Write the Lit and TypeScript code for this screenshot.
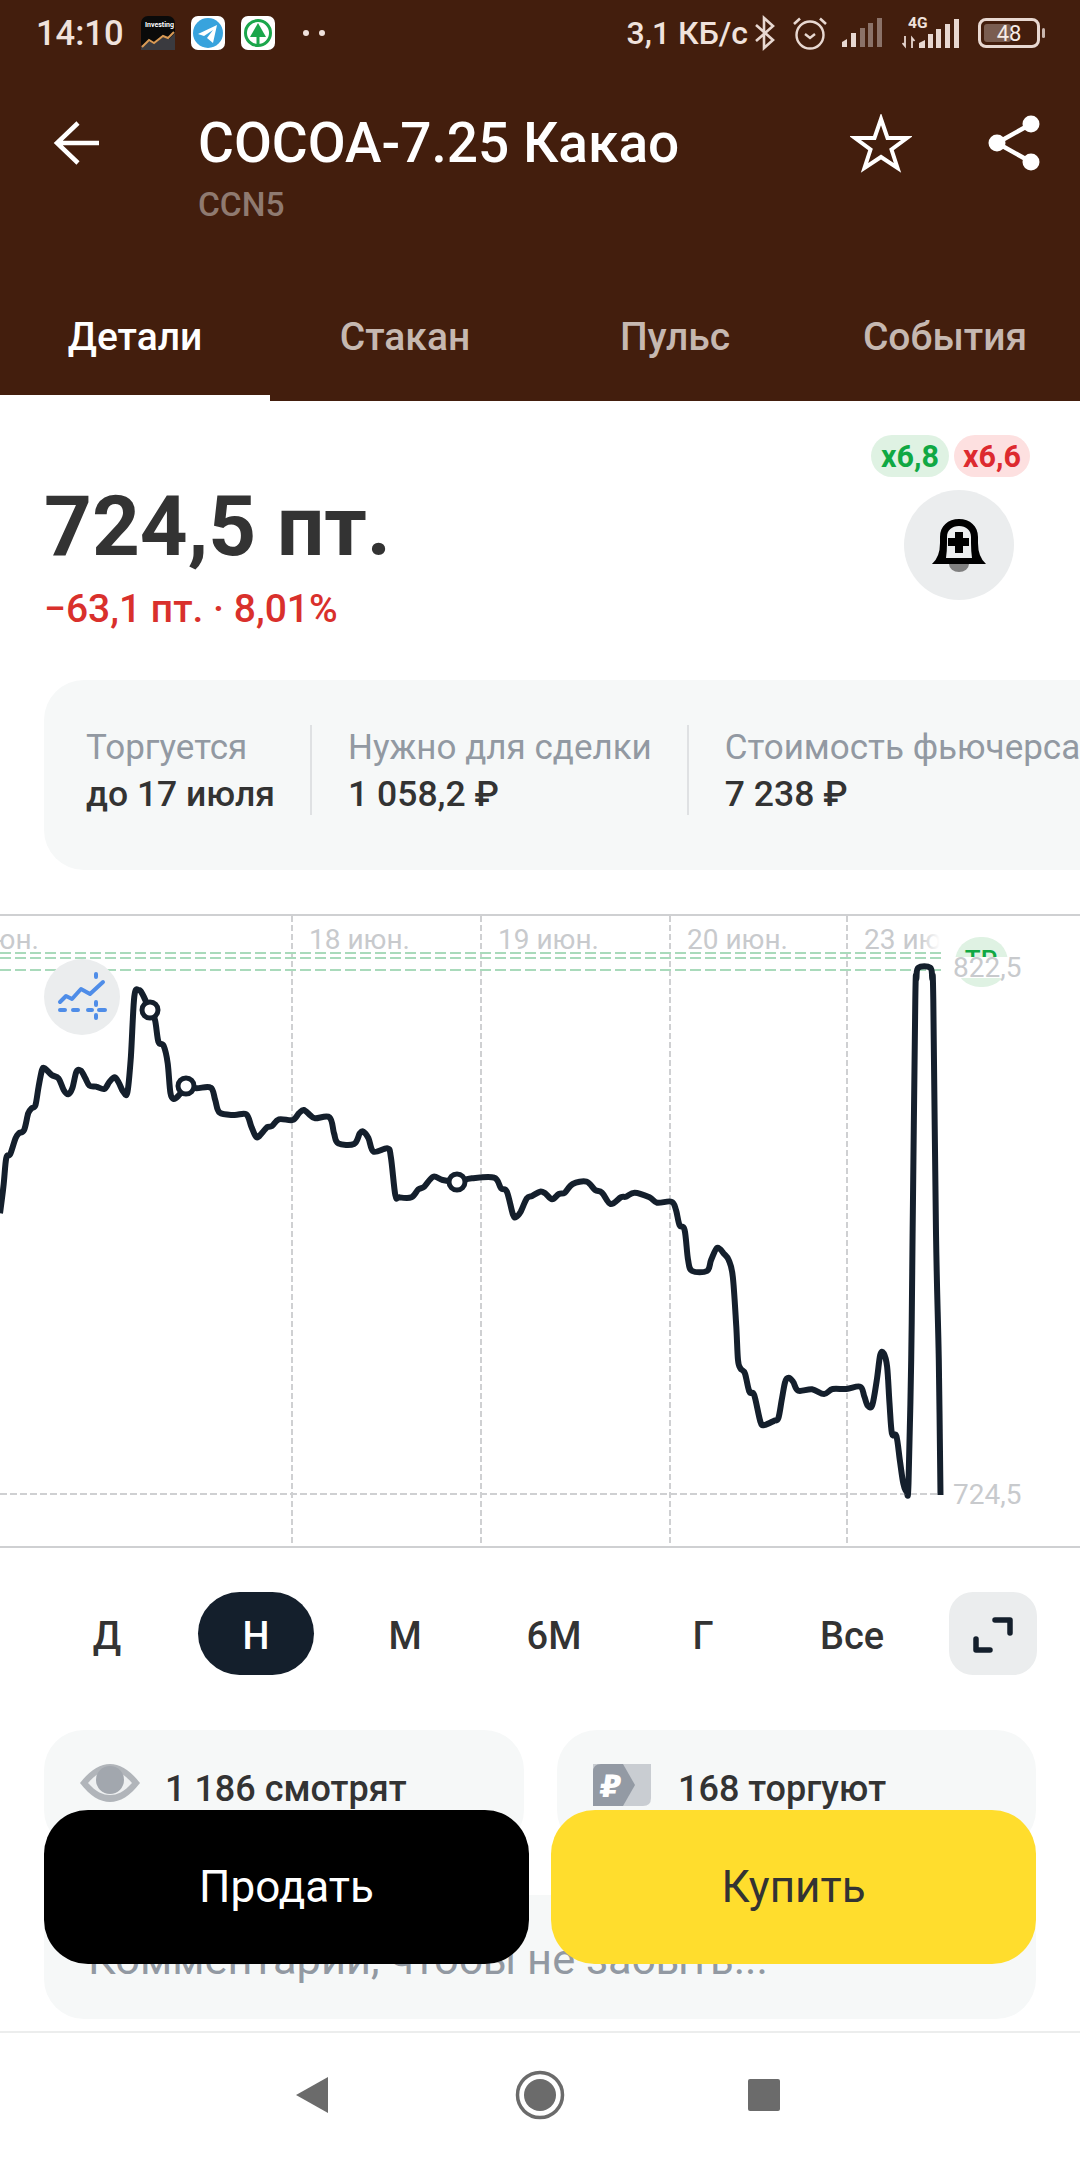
import { LitElement, html, css, svg } from 'lit';
import { customElement } from 'lit/decorators.js';

type Pt = [number, number];

// traced from zoomed crops, so each run has its own crop origin
const crop = (x0: number, y0: number, pts: Pt[]): Pt[] =>
  pts.map(([x, y]) => [x0 + x / 2.904, y0 + y / 3] as Pt);

const LINE: Pt[] = [
  ...crop(0, 900, [
    [0, 940], [10, 860], [18, 775], [30, 762], [45, 715], [55, 700], [70, 690], [82, 640], [92, 625], [103, 615],
    [112, 560], [122, 510], [130, 505], [150, 525], [170, 535], [185, 570], [198, 583], [210, 565], [222, 515],
    [235, 512], [248, 535], [260, 557], [280, 560], [303, 567], [318, 545], [333, 532], [345, 548], [358, 575],
    [370, 577], [380, 470], [390, 290], [403, 270], [415, 285], [435, 330], [450, 360], [460, 425], [475, 437],
    [487, 490], [495, 580], [505, 597], [520, 585], [540, 560], [570, 565], [612, 563], [625, 600], [638, 638],
    [680, 645], [715, 643], [730, 680], [745, 712], [760, 700], [775, 682], [790, 678], [810, 658], [850, 660],
    [868, 640], [882, 630], [900, 645], [915, 655], [957, 652], [970, 700], [982, 730], [1028, 732], [1045, 700],
    [1055, 695], [1070, 715], [1085, 755], [1125, 745], [1135, 770], [1148, 885], [1160, 892], [1195, 892],
    [1215, 868], [1232, 860], [1258, 830], [1285, 840], [1325, 845], [1370, 835], [1435, 833], [1455, 865],
    [1472, 875], [1490, 945], [1500, 950], [1512, 935], [1530, 895], [1545, 888],
  ]),
  ...crop(540, 900, [
    [0, 875], [15, 880], [35, 898], [55, 882], [72, 878], [95, 852], [135, 845], [160, 870], [180, 878], [205, 912],
    [235, 892], [250, 890], [275, 878], [318, 892], [340, 908], [382, 905], [395, 930], [405, 975], [420, 990],
    [430, 1080],
  ]),
  ...crop(540, 1260, [
    [442, 33], [485, 33], [497, 0], [515, -37], [535, -18], [548, 0], [560, 50], [570, 200], [575, 300], [582, 325],
    [595, 340], [608, 395], [622, 405], [640, 485], [652, 495], [680, 482], [692, 475], [702, 420], [712, 365],
    [722, 353], [735, 365], [750, 392], [790, 388], [825, 402], [850, 387], [890, 387], [930, 380], [942, 410],
    [952, 437], [965, 435], [978, 360], [988, 285], [998, 280], [1008, 320], [1015, 430], [1022, 520], [1035, 528],
    [1045, 600], [1055, 670], [1065, 695], [1070, 670], [1078, 300],
  ]),
  // the spike has a flat top, the extra points keep the curve from bulging over it
  ...crop(540, 900, [
    [1082, 1000], [1090, 300], [1093, 235], [1099, 203], [1133, 203], [1139, 235], [1142, 300], [1150, 1000],
  ]),
  ...crop(540, 1260, [[1158, 300], [1163, 705]]),
];

const smooth = (pts: Pt[]) => {
  let d = `M${pts[0][0]} ${pts[0][1]}`;
  for (let i = 0; i < pts.length - 1; i++) {
    const p0 = pts[Math.max(i - 1, 0)];
    const p1 = pts[i];
    const p2 = pts[i + 1];
    const p3 = pts[Math.min(i + 2, pts.length - 1)];
    const c1x = p1[0] + (p2[0] - p0[0]) / 6;
    const c1y = p1[1] + (p2[1] - p0[1]) / 6;
    const c2x = p2[0] - (p3[0] - p1[0]) / 6;
    const c2y = p2[1] - (p3[1] - p1[1]) / 6;
    d += `C${c1x.toFixed(1)} ${c1y.toFixed(1)} ${c2x.toFixed(1)} ${c2y.toFixed(1)} ${p2[0].toFixed(1)} ${p2[1].toFixed(1)}`;
  }
  return d;
};

const GRID_X = [292, 481, 670, 847];
const GREEN_Y = [953, 958, 970];
const MARKERS: Pt[] = [[150, 1010], [186, 1086], [457, 1182]];
const PERIODS = ['Д', 'Н', 'М', '6М', 'Г', 'Все'];
const TABS = ['Детали', 'Стакан', 'Пульс', 'События'];

@customElement('app-root')
export class AppRoot extends LitElement {
  static styles = css`
    :host {
      display: block;
      position: relative;
      width: 1080px;
      height: 2160px;
      overflow: hidden;
      background: #fff;
      font-family: Roboto, 'Noto Sans', sans-serif;
      color: #333;
    }
    svg {
      display: block;
    }
    .top {
      background: #431e0d;
      height: 401px;
      display: flex;
      flex-direction: column;
    }
    .status {
      height: 66px;
      display: flex;
      align-items: center;
      padding: 0 35px 0 36px;
      color: #f0e2dc;
      font-size: 32px;
      font-weight: 500;
    }
    .status .time {
      width: 105px;
      font-size: 34.5px;
    }
    .status .apps {
      display: flex;
      gap: 16px;
      align-items: center;
    }
    .status .dots {
      display: flex;
      gap: 10px;
      margin-left: 28px;
    }
    .status .dots i {
      width: 6px;
      height: 6px;
      border-radius: 50%;
      background: #f0e2dc;
    }
    .status .right {
      margin-left: auto;
      display: flex;
      align-items: center;
    }
    .battery {
      position: relative;
      width: 62px;
      height: 30px;
      box-sizing: border-box;
      border: 3px solid #e8d8d1;
      border-radius: 8px;
      display: flex;
      align-items: center;
      justify-content: center;
      font-size: 22px;
      font-weight: 400;
      color: #f5ebe6;
      margin-left: 16px;
    }
    .battery::before {
      content: '';
      position: absolute;
      left: 3px;
      top: 3px;
      bottom: 3px;
      width: 27px;
      border-radius: 3px;
      background: #7a5d50;
    }
    .battery span {
      position: relative;
    }
    .nub {
      width: 3px;
      height: 10px;
      border-radius: 2px;
      background: #c9b6ad;
      margin-left: 2px;
    }
    .toolbar {
      position: relative;
      height: 164px;
      padding-left: 198px;
      box-sizing: border-box;
    }
    .toolbar .back,
    .toolbar .star,
    .toolbar .share {
      position: absolute;
    }
    .toolbar .back {
      left: 50px;
      top: 50px;
    }
    .toolbar .star {
      left: 850px;
      top: 48px;
    }
    .toolbar .share {
      left: 985px;
      top: 46px;
    }
    .title {
      padding-top: 48px;
      font-size: 55px;
      line-height: 58px;
      font-weight: 500;
      color: #fff;
      white-space: nowrap;
    }
    .ticker {
      margin-top: 15px;
      font-size: 33.5px;
      line-height: 36px;
      font-weight: 500;
      color: #8f7a70;
    }
    .tabs {
      flex: 1;
      display: grid;
      grid-template-columns: repeat(4, 270px);
    }
    .tab {
      display: flex;
      align-items: center;
      justify-content: center;
      padding-top: 48px;
      padding-bottom: 6px;
      font-size: 39px;
      font-weight: 500;
      color: #c6b8b1;
      box-sizing: border-box;
    }
    .tab.active {
      color: #fff;
      border-bottom: 6px solid #fff;
      padding-bottom: 0;
    }
    .quote {
      height: 279px;
      box-sizing: border-box;
      padding: 34px 50px 0 44px;
      display: flex;
      justify-content: space-between;
    }
    .price {
      padding-top: 42px;
      font-size: 83.5px;
      line-height: 100px;
      font-weight: 700;
    }
    .change {
      margin-top: 11px;
      font-size: 39px;
      line-height: 42px;
      font-weight: 500;
      color: #d9302c;
    }
    .side {
      display: flex;
      flex-direction: column;
      align-items: flex-end;
    }
    .badges {
      display: flex;
      gap: 5px;
    }
    .badge {
      height: 42px;
      padding: 0 9px;
      display: flex;
      align-items: center;
      border-radius: 21px;
      font-size: 30.5px;
      font-weight: 700;
    }
    .badge.up {
      padding: 0 10px;
      background: #dff2e3;
      color: #10a843;
    }
    .badge.down {
      background: #fde0e0;
      color: #dd2a2f;
    }
    .bell {
      width: 110px;
      height: 110px;
      margin: 13px 16px 0 0;
      border-radius: 50%;
      background: #ebedee;
      display: flex;
      align-items: center;
      justify-content: center;
    }
    .info {
      margin-left: 44px;
      width: max-content;
      height: 190px;
      box-sizing: border-box;
      padding: 0 60px 10px 42px;
      border-radius: 40px 0 0 40px;
      background: #f6f8f8;
      display: flex;
      align-items: center;
      font-size: 35px;
    }
    .info .cell {
      padding-right: 35px;
      white-space: nowrap;
    }
    .info .cell + .cell {
      border-left: 2px solid #dfe1e3;
      padding-left: 36px;
    }
    .label {
      line-height: 45px;
      color: #9299a2;
    }
    .value {
      margin-top: 3px;
      line-height: 42px;
      font-size: 35.5px;
      font-weight: 500;
    }
    .chart {
      margin-top: 44px;
    }
    .chart text {
      font-family: Roboto, 'Noto Sans', sans-serif;
      fill: #c8cacd;
    }
    .periods {
      margin-top: 44px;
      height: 83px;
      padding-left: 49px;
      display: flex;
      gap: 33px;
      font-size: 38px;
      font-weight: 500;
    }
    .period {
      width: 116px;
      box-sizing: border-box;
      padding-top: 4px;
      display: flex;
      align-items: center;
      justify-content: center;
      border-radius: 42px;
    }
    .period.active {
      background: #141f2c;
      color: #fff;
    }
    .expand {
      width: 88px;
      margin-left: 6px;
      border-radius: 24px;
      background: #ebedee;
    }
    .stats {
      margin: 55px 44px 0;
      display: grid;
      grid-template-columns: 480px 479px;
      gap: 33px;
    }
    .stat {
      height: 120px;
      box-sizing: border-box;
      padding: 37px 0 0 36px;
      border-radius: 40px;
      background: #f6f8f8;
      display: flex;
      align-items: flex-start;
      gap: 25px;
      font-size: 36px;
      line-height: 44px;
      font-weight: 500;
    }
    .stat svg {
      margin-top: -3px;
    }
    .stat + .stat {
      gap: 27px;
    }
    .comment {
      margin: 45px 44px 0;
      height: 124px;
      box-sizing: border-box;
      padding: 40px 0 0 44px;
      border-radius: 40px;
      background: #f6f8f8;
      font-size: 43.4px;
      line-height: 50px;
      color: #9299a2;
    }
    .actions {
      position: absolute;
      left: 44px;
      top: 1810px;
      display: grid;
      grid-template-columns: 485px 485px;
      gap: 22px;
    }
    .btn {
      height: 154px;
      border-radius: 44px;
      display: flex;
      align-items: center;
      justify-content: center;
      font-size: 44px;
    }
    .btn.sell {
      background: #000;
      color: #fff;
    }
    .btn.buy {
      background: #ffdd2d;
      color: #333;
    }
    .nav {
      margin-top: 12px;
      border-top: 2px solid #eceded;
    }
  `;

  private _chart() {
    return html`<svg class="chart" width="1080" height="634" viewBox="0 914 1080 634">
      <defs>
        <linearGradient id="fade">
          <stop offset="0" stop-color="#fff" stop-opacity="0" />
          <stop offset="1" stop-color="#fff" />
        </linearGradient>
      </defs>
      <line x1="0" y1="915" x2="1080" y2="915" stroke="#cfd0d2" stroke-width="2" />
      <line x1="0" y1="1547" x2="1080" y2="1547" stroke="#cfd0d2" stroke-width="2" />
      ${GRID_X.map(
        (x) => svg`<line x1=${x} y1="916" x2=${x} y2="1546" stroke="#cfd0d2" stroke-width="2" stroke-dasharray="6 3" />`
      )}
      <line x1="0" y1="1494" x2="942" y2="1494" stroke="#cfd0d2" stroke-width="2" stroke-dasharray="7 3" />
      <text x="39" y="949" font-size="28" text-anchor="end">17 июн.</text>
      <text x="309" y="949" font-size="28">18 июн.</text>
      <text x="498" y="949" font-size="28">19 июн.</text>
      <text x="687" y="949" font-size="28">20 июн.</text>
      <text x="864" y="949" font-size="28">23 июн.</text>
      <rect x="920" y="925" width="20" height="27" fill="url(#fade)" />
      <rect x="940" y="925" width="60" height="27" fill="#fff" />
      ${GREEN_Y.map(
        (y) => svg`<line x1="0" y1=${y} x2="942" y2=${y} stroke="#a9dabb" stroke-width="2" stroke-dasharray="11 4" />`
      )}

      <rect x="955" y="937" width="53" height="50" rx="25" fill="#dff2e3" />
      <text x="981" y="969" font-size="26" font-weight="500" text-anchor="middle" style="fill:#10a843">TP</text>
      <rect x="950" y="957" width="64" height="21" fill="#fff" />
      <text x="953" y="977" font-size="28">822,5</text>
      <text x="953" y="1504" font-size="28">724,5</text>

      <circle cx="82" cy="997" r="38" fill="#ebedee" />
      <path
        d="M60 1002L66 996L72 999L81 989L90 994L103 982"
        fill="none"
        stroke="#4f8de8"
        stroke-width="4"
        stroke-linejoin="round"
        stroke-linecap="round"
      />
      <path
        d="M60 1010H65M73 1010H78M88 1010H92M99 1010H105M96 974V977M96 1002V1005M96 1015V1018"
        fill="none"
        stroke="#4f8de8"
        stroke-width="4"
        stroke-linecap="round"
      />

      <path d=${smooth(LINE)} fill="none" stroke="#141f2c" stroke-width="6" stroke-linejoin="round" stroke-linecap="butt" />
      ${MARKERS.map(
        ([x, y]) => svg`<circle cx=${x} cy=${y} r="8" fill="#fff" stroke="#141f2c" stroke-width="5" />`
      )}
    </svg>`;
  }

  private _statusIcons() {
    return html`
      <svg width="24" height="36" viewBox="0 0 24 36" style="margin-left:5px">
        <path d="M3 10L20 25L11 33V3L20 11L3 26" fill="none" stroke="#e8d8d1" stroke-width="2.6" />
      </svg>
      <svg width="36" height="36" viewBox="0 0 36 36" style="margin-left:15px">
        <circle cx="18" cy="20" r="13.5" fill="none" stroke="#e8d8d1" stroke-width="2.4" />
        <path d="M13 19L18 23L23 19" fill="none" stroke="#e8d8d1" stroke-width="2.4" />
        <path d="M2 9L8 3.5M34 9L28 3.5" fill="none" stroke="#e8d8d1" stroke-width="2.6" />
      </svg>
      <svg width="42" height="30" viewBox="0 0 42 30" style="margin-left:13px">
        <path d="M1 29V24L6 21V29Z" fill="#e8d8d1" />
        <rect x="10" y="15" width="5" height="14" fill="#e8d8d1" />
        <rect x="19" y="10" width="5" height="19" fill="#8b7268" />
        <rect x="27" y="5" width="5" height="24" fill="#8b7268" />
        <rect x="36" y="0" width="5" height="29" fill="#8b7268" />
      </svg>
      <svg width="60" height="34" viewBox="0 0 60 34" style="margin-left:19px">
        <text x="6" y="12" font-size="15.5" font-weight="700" fill="#f0e2dc" font-family="Roboto, sans-serif">4G</text>
        <path d="M3 20V30L0.5 27M10 32V22L12.5 25" fill="none" stroke="#e8d8d1" stroke-width="1.8" />
        <path d="M17 32V27L23 24V32Z" fill="#e8d8d1" />
        <rect x="26" y="18" width="5" height="14" fill="#e8d8d1" />
        <rect x="34" y="13" width="5" height="19" fill="#e8d8d1" />
        <rect x="43" y="8" width="5" height="24" fill="#e8d8d1" />
        <rect x="52" y="3" width="5" height="29" fill="#e8d8d1" />
      </svg>
      <div class="battery"><span>48</span></div>
      <div class="nub"></div>
    `;
  }

  render() {
    return html`
      <div class="top">
        <div class="status">
          <span class="time">14:10</span>
          <div class="apps">
            <svg width="34" height="34" viewBox="0 0 34 34">
              <rect width="34" height="34" rx="7" fill="#0a0a0a" />
              <path d="M0 34V30L8 25L13 28L22 21L28 23L34 17V34Z" fill="#3a3a3f" />
              <text x="4" y="11" font-size="7" font-weight="700" fill="#fff" font-family="Roboto, sans-serif">Investing</text>
              <path d="M1 31L8 24L13 27L22 20L27 22L33 16" fill="none" stroke="#d99a55" stroke-width="2" />
            </svg>
            <svg width="34" height="34" viewBox="0 0 34 34">
              <rect width="34" height="34" rx="7" fill="#fff" />
              <circle cx="17" cy="17" r="15" fill="#38a3dd" />
              <path d="M7 18L26 9L22 27L16 22L22 14L13 20Z" fill="#fff" />
            </svg>
            <svg width="34" height="34" viewBox="0 0 34 34">
              <rect width="34" height="34" rx="7" fill="#fff" />
              <circle cx="17" cy="17" r="12.5" fill="none" stroke="#1aa64b" stroke-width="3" />
              <path d="M17 7L25 21H9Z" fill="#1aa64b" />
              <rect x="15.5" y="21" width="3" height="8" fill="#1aa64b" />
            </svg>
          </div>
          <div class="dots"><i></i><i></i></div>
          <div class="right">
            <span>3,1 КБ/с</span>
            ${this._statusIcons()}
          </div>
        </div>

        <div class="toolbar">
          <svg class="back" width="56" height="56" viewBox="0 0 56 56">
            <path d="M49 27H8M28 7L7 27L28 47" fill="none" stroke="#fff" stroke-width="4.5" />
          </svg>
          <svg class="star" width="62" height="62" viewBox="0 0 62 62">
            <path
              d="M31 5L37.5 24H57L41.5 35.5L47.5 54L31 43L14.5 54L20.5 35.5L5 24H24.5Z"
              fill="none"
              stroke="#fff"
              stroke-width="4"
            />
          </svg>
          <svg class="share" width="60" height="70" viewBox="0 0 60 70">
            <circle cx="46" cy="12" r="8.5" fill="#fff" />
            <circle cx="12" cy="31" r="8.5" fill="#fff" />
            <circle cx="46" cy="50" r="8.5" fill="#fff" />
            <path d="M46 12L12 31L46 50" fill="none" stroke="#fff" stroke-width="4.5" />
          </svg>
          <div class="title">COCOA-7.25 Какао</div>
          <div class="ticker">CCN5</div>
        </div>

        <div class="tabs">
          ${TABS.map((t, i) => html`<div class="tab ${i === 0 ? 'active' : ''}">${t}</div>`)}
        </div>
      </div>

      <div class="quote">
        <div>
          <div class="price">724,5 пт.</div>
          <div class="change">−63,1 пт. · 8,01%</div>
        </div>
        <div class="side">
          <div class="badges">
            <div class="badge up">x6,8</div>
            <div class="badge down">x6,6</div>
          </div>
          <div class="bell">
            <svg width="60" height="60" viewBox="0 0 60 60">
              <path d="M3 49Q11 42 11 28V22C11 11 19 4 30 4C41 4 49 11 49 22V28Q49 42 57 49Z" fill="#000" />
              <path d="M17 43Q18 36 18 28V22C18 15 23 11 30 11C37 11 42 15 42 22V28Q42 36 43 43Z" fill="#eceeef" />
              <path d="M26 17H34V23H40V31H34V38H26V31H19V23H26Z" fill="#000" />
              <path d="M20 49A10 8 0 0 0 40 49Z" fill="#808080" />
            </svg>
          </div>
        </div>
      </div>

      <div class="info">
        <div class="cell">
          <div class="label">Торгуется</div>
          <div class="value">до 17 июля</div>
        </div>
        <div class="cell">
          <div class="label">Нужно для сделки</div>
          <div class="value">1 058,2 ₽</div>
        </div>
        <div class="cell">
          <div class="label">Стоимость фьючерса</div>
          <div class="value">7 238 ₽</div>
        </div>
      </div>

      ${this._chart()}

      <div class="periods">
        ${PERIODS.map((p) => html`<div class="period ${p === 'Н' ? 'active' : ''}">${p}</div>`)}
        <div class="expand">
          <svg width="88" height="83" viewBox="0 0 88 83">
            <path
              d="M46 28H61V41M27 47V58H41"
              fill="none"
              stroke="#141f2c"
              stroke-width="5.5"
              stroke-linecap="round"
              stroke-linejoin="round"
            />
          </svg>
        </div>
      </div>

      <div class="stats">
        <div class="stat">
          <svg width="60" height="38" viewBox="0 0 60 38">
            <path d="M0 19C10 6 20 0 30 0C40 0 50 6 60 19C50 32 40 38 30 38C20 38 10 32 0 19Z" fill="#b1b5ba" />
            <path d="M8 19C16 10 23 6 30 6C37 6 44 10 52 19C44 28 37 31 30 31C23 31 16 28 8 19Z" fill="#eef0f1" />
            <circle cx="30" cy="16" r="14" fill="#a2a7ae" />
          </svg>
          <span>1 186 смотрят</span>
        </div>
        <div class="stat">
          <svg width="58" height="42" viewBox="0 0 58 42">
            <path d="M0 0H58V34Q58 42 50 42H0Z" fill="#c9cdd2" />
            <path d="M8 0H30L42 21L30 42H0V8Q0 0 8 0Z" fill="#939aa4" />
            <text
              x="4"
              y="33"
              font-size="31"
              font-weight="900"
              font-family="'DejaVu Sans', sans-serif"
              fill="#fff"
              transform="skewX(-8) translate(6 0)"
            >₽</text>
          </svg>
          <span>168 торгуют</span>
        </div>
      </div>

      <div class="comment">Комментарий, чтобы не забыть...</div>

      <div class="nav">
        <svg width="1080" height="127" viewBox="0 2033 1080 127">
          <path d="M328 2077V2113L296 2095Z" fill="#6b6b6b" />
          <circle cx="540" cy="2095" r="22.5" fill="none" stroke="#6b6b6b" stroke-width="3.5" />
          <circle cx="540" cy="2095" r="16" fill="#6b6b6b" />
          <rect x="748" y="2079" width="32" height="32" rx="2" fill="#6b6b6b" />
        </svg>
      </div>

      <div class="actions">
        <div class="btn sell">Продать</div>
        <div class="btn buy">Купить</div>
      </div>
    `;
  }
}
